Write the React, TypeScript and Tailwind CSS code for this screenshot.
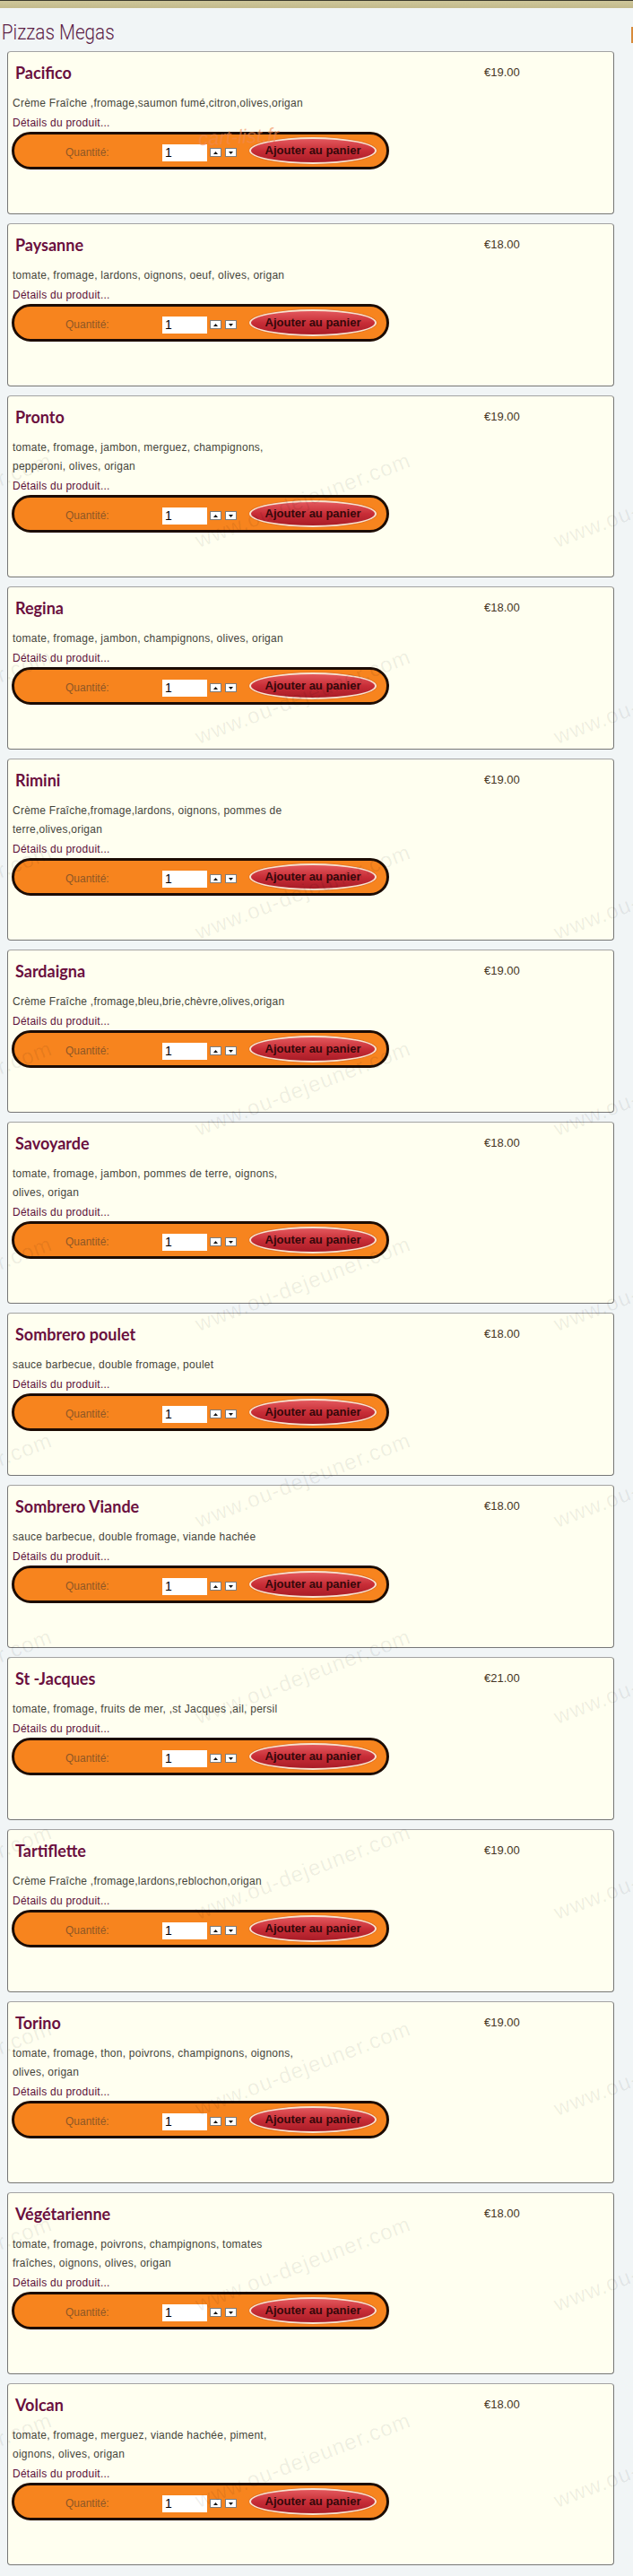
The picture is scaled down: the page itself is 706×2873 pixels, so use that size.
import React from 'react'

type Pizza = { name: string; price: string; desc: string[] }

const pizzas: Pizza[] = [
  { name: 'Pacifico', price: '€19.00', desc: ['Crème Fraîche ,fromage,saumon fumé,citron,olives,origan'] },
  { name: 'Paysanne', price: '€18.00', desc: ['tomate, fromage, lardons, oignons, oeuf, olives, origan'] },
  { name: 'Pronto', price: '€19.00', desc: ['tomate, fromage, jambon, merguez, champignons,', 'pepperoni, olives, origan'] },
  { name: 'Regina', price: '€18.00', desc: ['tomate, fromage, jambon, champignons, olives, origan'] },
  { name: 'Rimini', price: '€19.00', desc: ['Crème Fraîche,fromage,lardons, oignons, pommes de', 'terre,olives,origan'] },
  { name: 'Sardaigna', price: '€19.00', desc: ['Crème Fraîche ,fromage,bleu,brie,chèvre,olives,origan'] },
  { name: 'Savoyarde', price: '€18.00', desc: ['tomate, fromage, jambon, pommes de terre, oignons,', 'olives, origan'] },
  { name: 'Sombrero poulet', price: '€18.00', desc: ['sauce barbecue, double fromage, poulet'] },
  { name: 'Sombrero Viande', price: '€18.00', desc: ['sauce barbecue, double fromage, viande hachée'] },
  { name: 'St -Jacques', price: '€21.00', desc: ['tomate, fromage, fruits de mer, ,st Jacques ,ail, persil'] },
  { name: 'Tartiflette', price: '€19.00', desc: ['Crème Fraîche ,fromage,lardons,reblochon,origan'] },
  { name: 'Torino', price: '€19.00', desc: ['tomate, fromage, thon, poivrons, champignons, oignons,', 'olives, origan'] },
  { name: 'Végétarienne', price: '€18.00', desc: ['tomate, fromage, poivrons, champignons, tomates', 'fraîches, oignons, olives, origan'] },
  { name: 'Volcan', price: '€18.00', desc: ['tomate, fromage, merguez, viande hachée, piment,', 'oignons, olives, origan'] },
]

// repeated site stamp laid over the list
const stampRows = Array.from({ length: 11 }, (_, i) => 558 + i * 218.6)
const stampCols = [-62, 338, 738]

function Spinner({ up }: { up?: boolean }) {
  return (
    <div className="w-[13px] h-[10px] bg-white border border-[#7d7d7d] flex items-center justify-center">
      <svg width="5" height="3" viewBox="0 0 5 3">
        {up ? <polygon points="2.5,0 5,3 0,3" fill="#111" /> : <polygon points="0,0 5,0 2.5,3" fill="#111" />}
      </svg>
    </div>
  )
}

function CartBar() {
  return (
    <div className="w-[421px] h-[42px] rounded-full border-[3px] border-[#1c0c04] bg-[#f7841e] flex items-center">
      <span className="ml-[57px] w-[108px] mt-[4px] text-[12px] leading-none text-[#8e5726] font-['Liberation_Sans',Arial,sans-serif]">
        Quantité:
      </span>
      <input
        readOnly
        value="1"
        className="mt-[4px] w-[50px] h-[19px] bg-white pl-[3px] text-[14px] text-black outline-none font-['Liberation_Sans',Arial,sans-serif]"
      />
      <div className="mt-[4px] ml-[3px] flex gap-[4px]">
        <Spinner up />
        <Spinner />
      </div>
      <button className="ml-[14px] w-[142px] h-[30px] rounded-[50%] border-2 border-[#f7e3d0] bg-linear-to-b from-[#e2575d] via-[#c82d37] to-[#a91c27] shadow-[0_0_1px_#8a1a20] text-[13px] font-bold text-[#35080a] font-['Liberation_Sans',Arial,sans-serif]">
        Ajouter au panier
      </button>
    </div>
  )
}

function PizzaCard({ pizza, first }: { pizza: Pizza; first?: boolean }) {
  return (
    <div className="relative w-[677px] rounded-[4px] border border-[#767676] border-t-[#a3a3a3] bg-[#fffff0] pt-[11px] pb-[49px] pl-[4px]">
      <div className="flex items-start">
        <div className="w-[527px] flex-none pl-[4px] text-[18px] leading-[24px] font-bold text-[#6a0f3e] font-['Lato',sans-serif]">
          {pizza.name}
        </div>
        <div className="mt-[4px] text-[13px] leading-[16px] text-[#453524] font-['Liberation_Sans',Arial,sans-serif]">
          {pizza.price}
        </div>
      </div>
      <div className="mt-[12px] pl-[1px] text-[12px] tracking-[0.25px] text-[#45443a] font-['Liberation_Sans',Arial,sans-serif]">
        {pizza.desc.map(line => (
          <div key={line} className="leading-[21px] whitespace-nowrap">{line}</div>
        ))}
      </div>
      <div className="mt-[2px] pl-[1px] text-[12px] leading-[19px] tracking-[0.25px] text-[#5c0f38] font-['Liberation_Sans',Arial,sans-serif]">
        Détails du produit...
      </div>
      <CartBar />
      {first && (
        <span className="absolute left-[212px] top-[78px] -rotate-[3deg] text-[22px] italic text-[#f08a55]/60 pointer-events-none font-['Liberation_Sans',Arial,sans-serif]">
          cart-list.fr
        </span>
      )}
    </div>
  )
}

export default function App() {
  return (
    <div className="relative min-h-[2873px] bg-[#f1f5f6] overflow-hidden">
      <div className="h-[1px] bg-[#3b3a2c]" />
      <div className="h-[8px] bg-linear-to-b from-[#cfc79b] to-[#c3ba8c]" />

      <div className="flex justify-between">
        <h1 className="mt-[14px] mb-[6px] pl-[2px] text-[23px] leading-[28px] font-light text-[#5c2147] origin-left scale-x-[0.9] font-['Roboto',sans-serif]">
          Pizzas Megas
        </h1>
        <div className="mt-[21px] w-[2px] h-[18px] bg-[#d88a3a]" />
      </div>

      <div className="pl-[8px] pb-[12px] flex flex-col gap-[10px]">
        {pizzas.map((p, i) => (
          <PizzaCard key={p.name} pizza={p} first={i === 0} />
        ))}
      </div>

      <div className="absolute inset-0 pointer-events-none">
        {stampRows.map(y =>
          stampCols.map(x => (
            <span
              key={`${x}-${y}`}
              className="absolute -translate-x-1/2 -translate-y-1/2 -rotate-[21deg] whitespace-nowrap text-[24px] tracking-[1px] text-black/[0.07] font-['Liberation_Sans',Arial,sans-serif]"
              style={{ left: x, top: y }}
            >
              www.ou-dejeuner.com
            </span>
          ))
        )}
      </div>
    </div>
  )
}
